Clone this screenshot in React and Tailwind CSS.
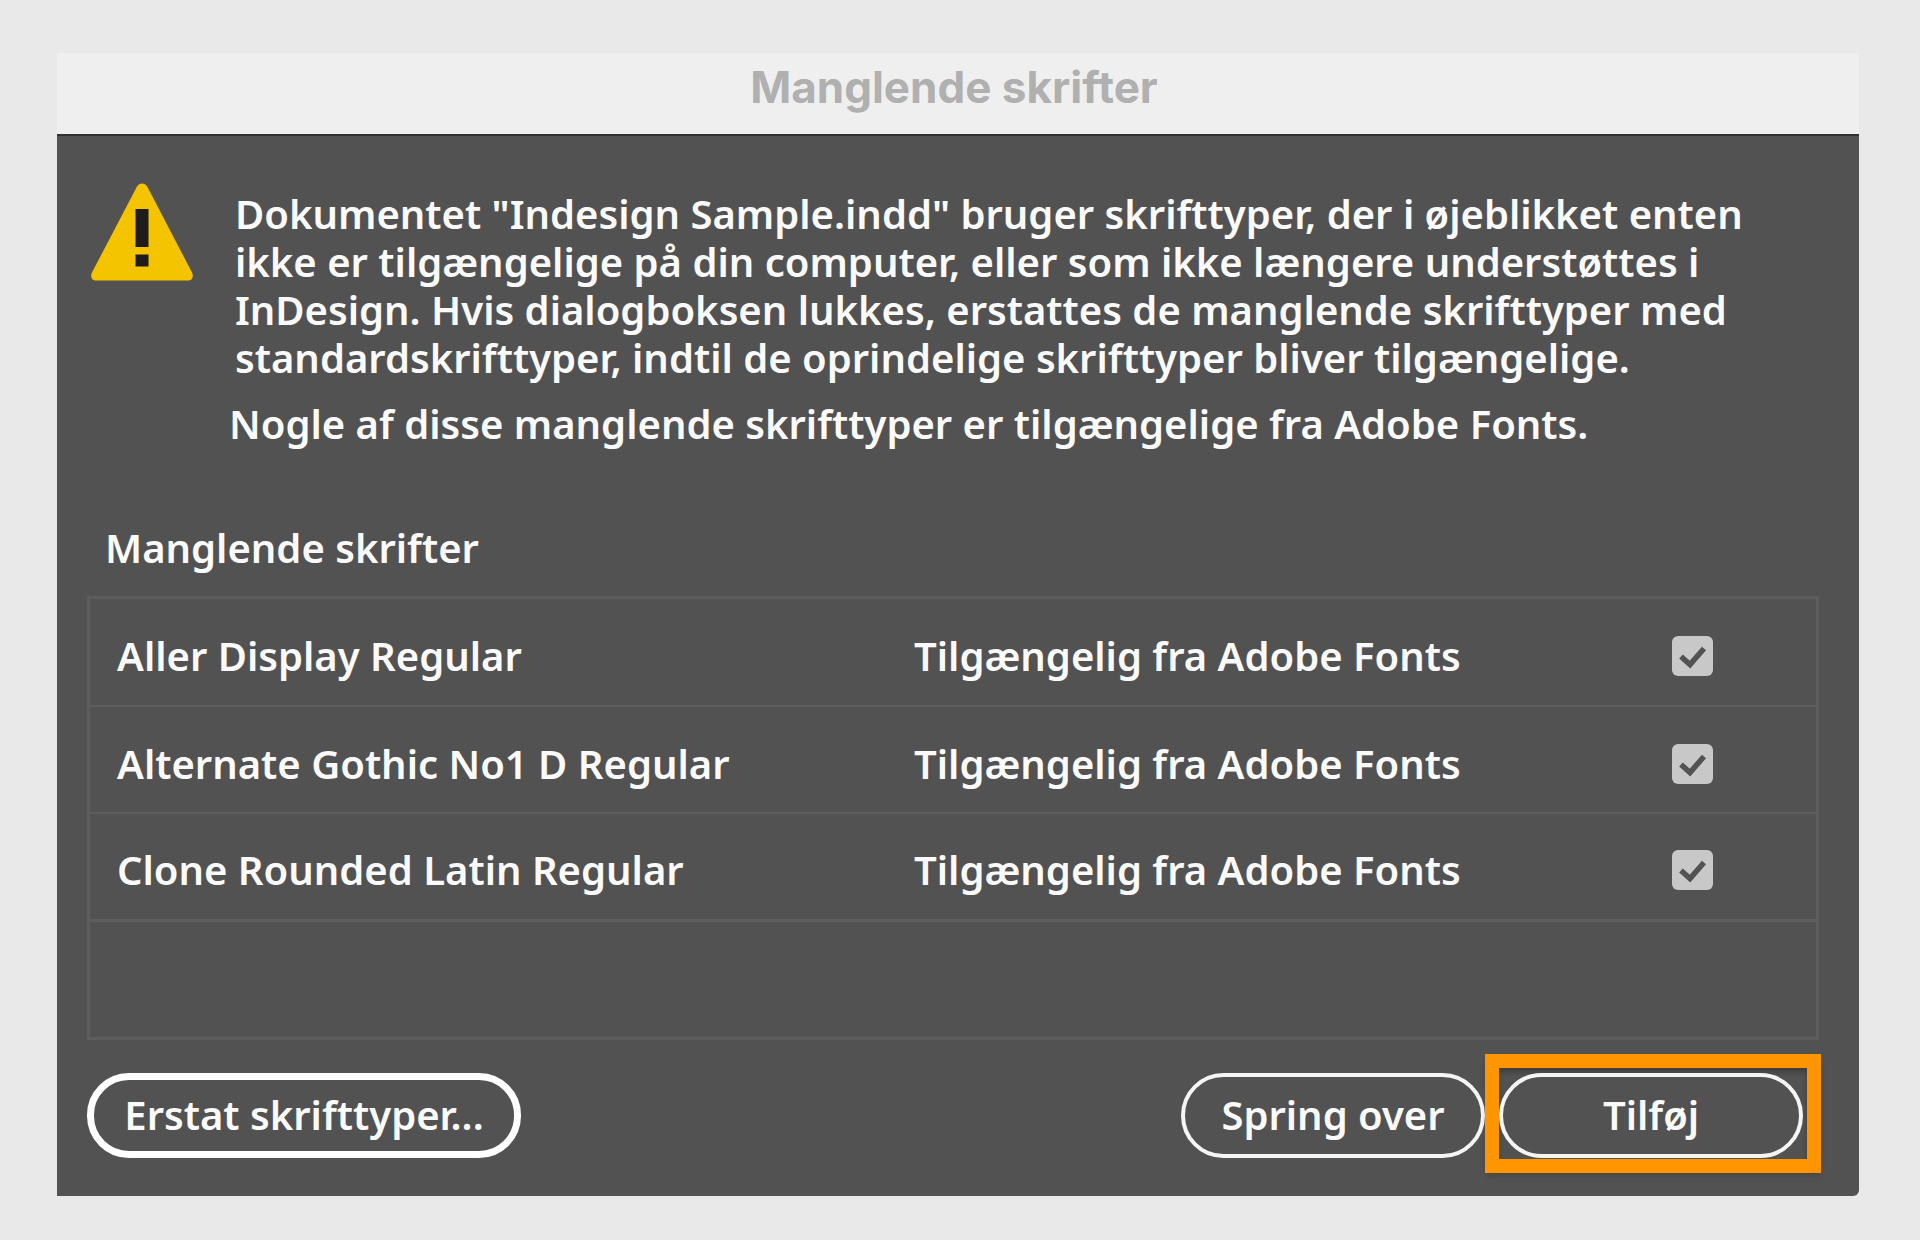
import { useState } from "react";

const initialFonts = [
	{ id: "aller", name: "Aller Display Regular", status: "Tilgængelig fra Adobe Fonts", checked: true },
	{ id: "alternate", name: "Alternate Gothic No1 D Regular", status: "Tilgængelig fra Adobe Fonts", checked: true },
	{ id: "clone", name: "Clone Rounded Latin Regular", status: "Tilgængelig fra Adobe Fonts", checked: true },
];

const WarningIcon = () => (
	<svg viewBox="0 0 102 98" className="h-[98px] w-[102px] shrink-0" aria-hidden="true">
		<path
			d="M46 3.5C48.3-.6 53.9-.6 56.200 3.500L101 89.500C103 93.500 101.200 97.500 97 97.500H5C.8 97.500-1 93.500 1 89.500Z"
			fill="#f5c400"
		/>
		<rect x="44.500" y="26" width="13" height="38" fill="#1f1c1d" />
		<rect x="44.500" y="71.500" width="13" height="12" fill="#1f1c1d" />
	</svg>
);

const FontRow = ({ font, onToggle }) => (
	<tr className="h-[107px] border-b-2 border-[#5d5d5d] last:border-b-3">
		<td className="pt-2 pl-[27px]">
			<label htmlFor={font.id}>{font.name}</label>
		</td>
		<td className="w-[758px] pt-2">{font.status}</td>
		<td className="w-36 pt-2">
			<div className="relative h-10 w-[41px]">
				<input
					id={font.id}
					type="checkbox"
					checked={font.checked}
					onChange={() => onToggle(font.id)}
					className="peer block h-10 w-[41px] appearance-none rounded-md bg-[#c8c8c8]"
				/>
				<svg
					viewBox="0 0 41 40"
					className="pointer-events-none absolute inset-0 hidden h-10 w-[41px] peer-checked:block"
					fill="none"
					stroke="#525252"
					strokeWidth="5.500"
					aria-hidden="true"
				>
					<path d="M9 20.500L18 28.500L32 12.500" />
				</svg>
			</div>
		</td>
	</tr>
);

const App = () => {
	const [fonts, setFonts] = useState(initialFonts);

	const toggleFont = (id) => {
		setFonts((prev) => prev.map((font) => (font.id === id ? { ...font, checked: !font.checked } : font)));
	};

	return (
		<main className="min-h-screen bg-[#e9e9e9] pt-[53px] pr-[61px] pb-11 pl-[57px] font-['Noto_Sans',sans-serif] text-[40px] leading-[48px] font-semibold text-[#fafafa]">
			<section role="dialog" aria-labelledby="dialog-title" className="overflow-hidden rounded-br-md bg-[#525252]">
				<header className="flex h-[81px] items-start justify-center bg-[#efefef] pt-2 pr-2">
					<h1 id="dialog-title" className="font-['Inter',sans-serif] text-[44px] leading-[52px] font-bold text-[#b0b0b0]">
						Manglende skrifter
					</h1>
				</header>

				<div className="border-t-2 border-[#303030] pt-[47px] pr-10 pb-[23px] pl-[30px]">
					<div className="flex items-start gap-[42px] pl-1">
						<WarningIcon />
						<div className="pt-[7px] whitespace-nowrap">
							<p>
								Dokumentet "Indesign Sample.indd" bruger skrifttyper, der i øjeblikket enten
								<br />
								ikke er tilgængelige på din computer, eller som ikke længere understøttes i
								<br />
								InDesign. Hvis dialogboksen lukkes, erstattes de manglende skrifttyper med
								<br />
								standardskrifttyper, indtil de oprindelige skrifttyper bliver tilgængelige.
							</p>
							<p className="-ml-1.5 pt-[18px]">Nogle af disse manglende skrifttyper er tilgængelige fra Adobe Fonts.</p>
						</div>
					</div>

					<h2 id="missing-fonts" className="pt-[76px] pl-[18px]">
						Manglende skrifter
					</h2>

					<div className="mt-6 border-3 border-[#5d5d5d]">
						<table className="w-full border-collapse text-left" aria-labelledby="missing-fonts">
							<tbody>
								{fonts.map((font) => (
									<FontRow key={font.id} font={font} onToggle={toggleFont} />
								))}
							</tbody>
						</table>
						<div className="h-[115px]" />
					</div>

					<div className="mt-[14px] flex items-center justify-between">
						<button
							type="button"
							className="mt-1 h-[85px] w-[434px] rounded-[42px] border-7 border-white whitespace-nowrap"
						>
							Erstat skrifttyper...
						</button>
						<div className="-mr-[2px] flex items-center">
							<button type="button" className="mt-1 h-[85px] w-[304px] rounded-full border-4 border-[#f5f5f5]">
								Spring over
							</button>
							<div className="h-[119px] w-[336px] border-14 border-[#ff9500] shadow-md">
								<div className="flex h-full items-center justify-center pt-1 pr-1 shadow-[inset_0_4px_5px_rgba(0,0,0,0.25)]">
									<button type="button" className="h-[85px] w-[304px] rounded-full border-4 border-[#f5f5f5]">
										Tilføj
									</button>
								</div>
							</div>
						</div>
					</div>
				</div>
			</section>
		</main>
	);
};

export default App;
